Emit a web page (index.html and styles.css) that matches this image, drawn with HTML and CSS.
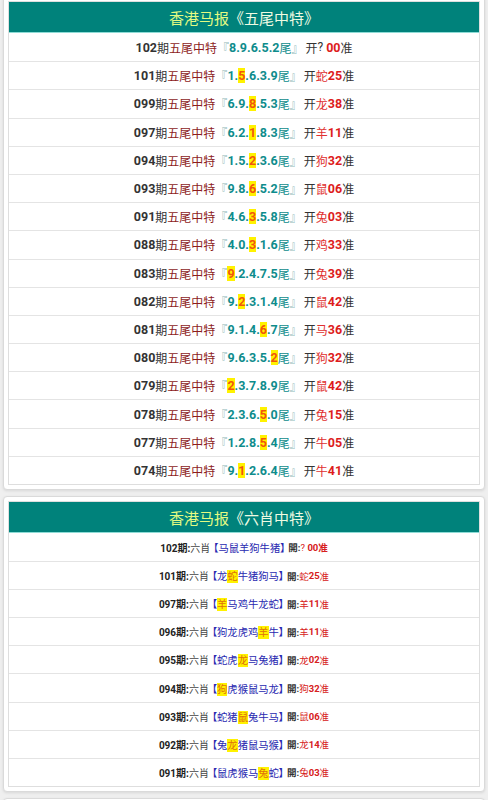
FILE: index.html
```html
<!DOCTYPE html>
<html lang="zh">
<head>
<meta charset="utf-8">
<title>香港马报</title>
<link rel="stylesheet" href="styles.css">
</head>
<body>
<div class="page">
  <section class="card">
    <div class="table">
      <div class="head"><span class="h1">香港马报</span><span class="h2">《五尾中特》</span></div>
      <div class="row"><b class="no">102</b><span class="qi">期</span><span class="tt">五尾中特</span><span class="br">『</span><b class="nums">8.9.6.5.2</b><span class="wei">尾</span><span class="br">』</span><span class="kai">开</span><span class="q">?</span>&nbsp;<b class="res">00</b><span class="zhun">准</span></div>
      <div class="row"><b class="no">101</b><span class="qi">期</span><span class="tt">五尾中特</span><span class="br">『</span><b class="nums">1.<mark>5</mark>.6.3.9</b><span class="wei">尾</span><span class="br">』</span><span class="kai">开</span><span class="zod">蛇</span><b class="res">25</b><span class="zhun">准</span></div>
      <div class="row"><b class="no">099</b><span class="qi">期</span><span class="tt">五尾中特</span><span class="br">『</span><b class="nums">6.9.<mark>8</mark>.5.3</b><span class="wei">尾</span><span class="br">』</span><span class="kai">开</span><span class="zod">龙</span><b class="res">38</b><span class="zhun">准</span></div>
      <div class="row"><b class="no">097</b><span class="qi">期</span><span class="tt">五尾中特</span><span class="br">『</span><b class="nums">6.2.<mark>1</mark>.8.3</b><span class="wei">尾</span><span class="br">』</span><span class="kai">开</span><span class="zod">羊</span><b class="res">11</b><span class="zhun">准</span></div>
      <div class="row"><b class="no">094</b><span class="qi">期</span><span class="tt">五尾中特</span><span class="br">『</span><b class="nums">1.5.<mark>2</mark>.3.6</b><span class="wei">尾</span><span class="br">』</span><span class="kai">开</span><span class="zod">狗</span><b class="res">32</b><span class="zhun">准</span></div>
      <div class="row"><b class="no">093</b><span class="qi">期</span><span class="tt">五尾中特</span><span class="br">『</span><b class="nums">9.8.<mark>6</mark>.5.2</b><span class="wei">尾</span><span class="br">』</span><span class="kai">开</span><span class="zod">鼠</span><b class="res">06</b><span class="zhun">准</span></div>
      <div class="row"><b class="no">091</b><span class="qi">期</span><span class="tt">五尾中特</span><span class="br">『</span><b class="nums">4.6.<mark>3</mark>.5.8</b><span class="wei">尾</span><span class="br">』</span><span class="kai">开</span><span class="zod">兔</span><b class="res">03</b><span class="zhun">准</span></div>
      <div class="row"><b class="no">088</b><span class="qi">期</span><span class="tt">五尾中特</span><span class="br">『</span><b class="nums">4.0.<mark>3</mark>.1.6</b><span class="wei">尾</span><span class="br">』</span><span class="kai">开</span><span class="zod">鸡</span><b class="res">33</b><span class="zhun">准</span></div>
      <div class="row"><b class="no">083</b><span class="qi">期</span><span class="tt">五尾中特</span><span class="br">『</span><b class="nums"><mark>9</mark>.2.4.7.5</b><span class="wei">尾</span><span class="br">』</span><span class="kai">开</span><span class="zod">兔</span><b class="res">39</b><span class="zhun">准</span></div>
      <div class="row"><b class="no">082</b><span class="qi">期</span><span class="tt">五尾中特</span><span class="br">『</span><b class="nums">9.<mark>2</mark>.3.1.4</b><span class="wei">尾</span><span class="br">』</span><span class="kai">开</span><span class="zod">鼠</span><b class="res">42</b><span class="zhun">准</span></div>
      <div class="row"><b class="no">081</b><span class="qi">期</span><span class="tt">五尾中特</span><span class="br">『</span><b class="nums">9.1.4.<mark>6</mark>.7</b><span class="wei">尾</span><span class="br">』</span><span class="kai">开</span><span class="zod">马</span><b class="res">36</b><span class="zhun">准</span></div>
      <div class="row"><b class="no">080</b><span class="qi">期</span><span class="tt">五尾中特</span><span class="br">『</span><b class="nums">9.6.3.5.<mark>2</mark></b><span class="wei">尾</span><span class="br">』</span><span class="kai">开</span><span class="zod">狗</span><b class="res">32</b><span class="zhun">准</span></div>
      <div class="row"><b class="no">079</b><span class="qi">期</span><span class="tt">五尾中特</span><span class="br">『</span><b class="nums"><mark>2</mark>.3.7.8.9</b><span class="wei">尾</span><span class="br">』</span><span class="kai">开</span><span class="zod">鼠</span><b class="res">42</b><span class="zhun">准</span></div>
      <div class="row"><b class="no">078</b><span class="qi">期</span><span class="tt">五尾中特</span><span class="br">『</span><b class="nums">2.3.6.<mark>5</mark>.0</b><span class="wei">尾</span><span class="br">』</span><span class="kai">开</span><span class="zod">兔</span><b class="res">15</b><span class="zhun">准</span></div>
      <div class="row"><b class="no">077</b><span class="qi">期</span><span class="tt">五尾中特</span><span class="br">『</span><b class="nums">1.2.8.<mark>5</mark>.4</b><span class="wei">尾</span><span class="br">』</span><span class="kai">开</span><span class="zod">牛</span><b class="res">05</b><span class="zhun">准</span></div>
      <div class="row"><b class="no">074</b><span class="qi">期</span><span class="tt">五尾中特</span><span class="br">『</span><b class="nums">9.<mark>1</mark>.2.6.4</b><span class="wei">尾</span><span class="br">』</span><span class="kai">开</span><span class="zod">牛</span><b class="res">41</b><span class="zhun">准</span></div>
    </div>
  </section>

  <section class="card">
    <div class="table">
      <div class="head"><span class="h1">香港马报</span><span class="h2">《六肖中特》</span></div>
      <div class="row2"><b class="no2">102期:</b><span class="lx">六肖</span><span class="blue">【马鼠羊狗牛猪】</span><b class="kai2">開:</b><span class="r2">?</span>&nbsp;<b class="r2">00准</b></div>
      <div class="row2"><b class="no2">101期:</b><span class="lx">六肖</span><span class="blue">【龙<mark>蛇</mark>牛猪狗马】</span><b class="kai2">開:</b><span class="r2">蛇</span><b class="r2">25</b><span class="r2">准</span></div>
      <div class="row2"><b class="no2">097期:</b><span class="lx">六肖</span><span class="blue">【<mark>羊</mark>马鸡牛龙蛇】</span><b class="kai2">開:</b><span class="r2">羊</span><b class="r2">11</b><span class="r2">准</span></div>
      <div class="row2"><b class="no2">096期:</b><span class="lx">六肖</span><span class="blue">【狗龙虎鸡<mark>羊</mark>牛】</span><b class="kai2">開:</b><span class="r2">羊</span><b class="r2">11</b><span class="r2">准</span></div>
      <div class="row2"><b class="no2">095期:</b><span class="lx">六肖</span><span class="blue">【蛇虎<mark>龙</mark>马兔猪】</span><b class="kai2">開:</b><span class="r2">龙</span><b class="r2">02</b><span class="r2">准</span></div>
      <div class="row2"><b class="no2">094期:</b><span class="lx">六肖</span><span class="blue">【<mark>狗</mark>虎猴鼠马龙】</span><b class="kai2">開:</b><span class="r2">狗</span><b class="r2">32</b><span class="r2">准</span></div>
      <div class="row2"><b class="no2">093期:</b><span class="lx">六肖</span><span class="blue">【蛇猪<mark>鼠</mark>兔牛马】</span><b class="kai2">開:</b><span class="r2">鼠</span><b class="r2">06</b><span class="r2">准</span></div>
      <div class="row2"><b class="no2">092期:</b><span class="lx">六肖</span><span class="blue">【兔<mark>龙</mark>猪鼠马猴】</span><b class="kai2">開:</b><span class="r2">龙</span><b class="r2">14</b><span class="r2">准</span></div>
      <div class="row2"><b class="no2">091期:</b><span class="lx">六肖</span><span class="blue">【鼠虎猴马<mark>兔</mark>蛇】</span><b class="kai2">開:</b><span class="r2">兔</span><b class="r2">03</b><span class="r2">准</span></div>
    </div>
  </section>

  <section class="card card-empty"></section>
</div>
</body>
</html>
```

FILE: styles.css
```css
html, body {
  margin: 0;
  padding: 0;
}
body {
  background: #efefef;
  font-family: Roboto, "Noto Sans CJK SC", sans-serif;
  color: #333;
  overflow: hidden;
}
.page {
  display: flex;
  flex-direction: column;
  gap: 6px;
  padding: 0 3px;
  margin-top: -4px;
}
.card {
  background: #fff;
  border: 1px solid #dadada;
  border-radius: 4px;
  padding: 4px;
  box-shadow: 0 1px 3px rgba(0, 0, 0, 0.10);
}
.card-empty {
  height: 20px;
}
.table {
  border: 1px solid #dedede;
}
.head {
  height: 30px;
  background: #00827b;
  border-bottom: 1px solid #8fdcd6;
  display: flex;
  align-items: center;
  justify-content: center;
  font-size: 15px;
  font-family: "Noto Sans CJK SC", sans-serif;
}
.h1 {
  color: #e4fb82;
}
.h2 {
  color: #eefbe2;
}
.row, .row2 {
  box-sizing: border-box;
  display: flex;
  align-items: center;
  justify-content: center;
  white-space: nowrap;
  border-top: 1px solid #e4e4e4;
}
.head + .row, .head + .row2 {
  border-top: none;
}
.row {
  height: 28.19px;
  font-size: 12px;
}
.row2 {
  height: 28.1px;
  font-size: 9.5px;
}
mark {
  background: #fff200;
  color: #f2560c;
  padding: 0;
}
.no {
  color: #333;
  font-weight: 700;
  font-size: 12.5px;
}
.qi {
  color: #333;
}
.tt {
  color: #8d1c1c;
}
.br {
  color: #8fb9b9;
}
.nums {
  color: #0e8c8c;
  font-weight: 700;
  font-size: 12.5px;
}
.wei {
  color: #0e8c8c;
}
.kai {
  color: #333;
  margin-left: 2px;
}
.q {
  color: #333;
}
.zod {
  color: #e03030;
}
.res {
  color: #dd1c1c;
  font-weight: 700;
  font-size: 12.5px;
}
.zhun {
  color: #333;
}
.no2 {
  color: #222;
  font-weight: 700;
  font-size: 10px;
}
.lx {
  color: #444;
  font-size: 10px;
}
.blue {
  color: #2828b0;
  font-size: 10.3px;
  font-feature-settings: "palt";
  margin: 0 3px;
}
.blue mark {
  color: #e0700a;
}
.kai2 {
  color: #333;
  font-weight: 700;
}
.r2 {
  color: #d62020;
}
```
